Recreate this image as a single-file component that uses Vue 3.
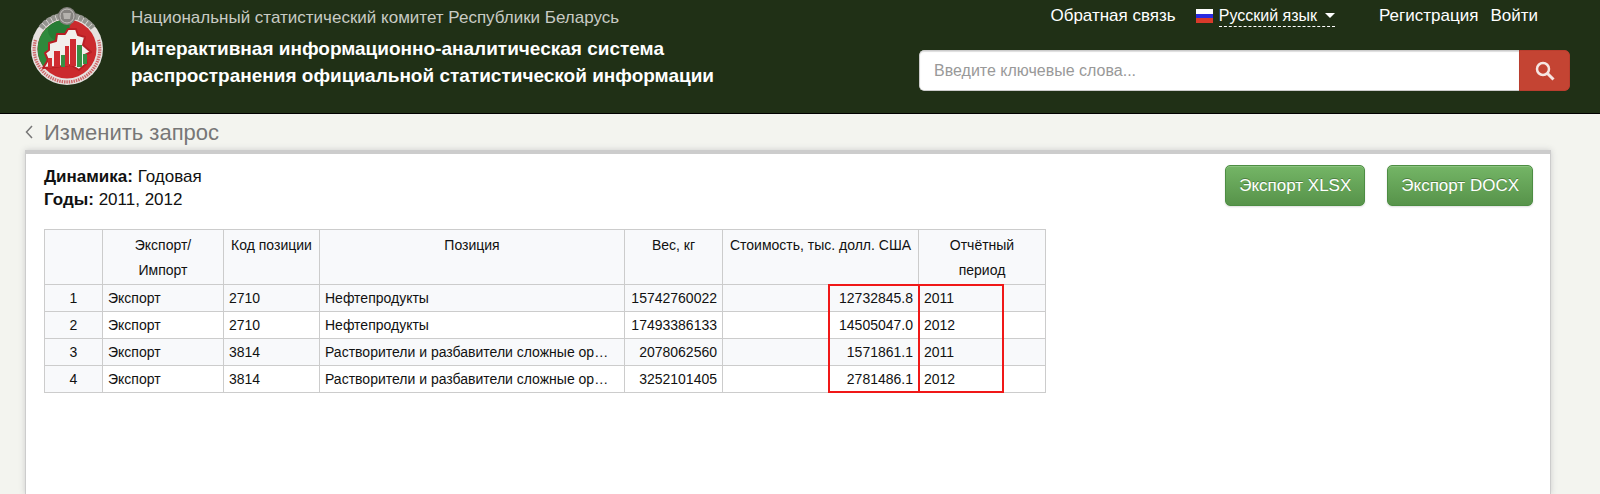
<script setup>
const columns = [
  { key: 'num', title: '', cls: 'c-num' },
  { key: 'dir', title: 'Экспорт/ Импорт', cls: 'c-dir' },
  { key: 'code', title: 'Код позиции', cls: 'c-code' },
  { key: 'name', title: 'Позиция', cls: 'c-name' },
  { key: 'weight', title: 'Вес, кг', cls: 'c-weight' },
  { key: 'cost', title: 'Стоимость, тыс. долл. США', cls: 'c-cost' },
  { key: 'period', title: 'Отчётный период', cls: 'c-period' },
]
const rows = [
  { dir: 'Экспорт', code: '2710', name: 'Нефтепродукты', weight: '15742760022', cost: '12732845.8', period: '2011' },
  { dir: 'Экспорт', code: '2710', name: 'Нефтепродукты', weight: '17493386133', cost: '14505047.0', period: '2012' },
  { dir: 'Экспорт', code: '3814', name: 'Растворители и разбавители сложные ор…', weight: '2078062560', cost: '1571861.1', period: '2011' },
  { dir: 'Экспорт', code: '3814', name: 'Растворители и разбавители сложные ор…', weight: '3252101405', cost: '2781486.1', period: '2012' },
]
const dataColumns = columns.slice(1)
</script>

<template>
  <div class="page">
    <header class="top">
      <a class="brand" href="#">
        <svg class="logo" viewBox="0 0 76 80" aria-hidden="true">
          <defs>
            <clipPath id="disc"><circle cx="38" cy="43" r="29.500" /></clipPath>
          </defs>
          <circle cx="38" cy="43" r="36" fill="#e6e2e0" />
          <path d="M12 22 A33 33 0 0 1 64 22" fill="none" stroke="#94948f" stroke-width="6" stroke-dasharray="4 0.7" />
          <path d="M6.500 34 A32.800 32.800 0 1 0 69.500 34" fill="none" stroke="#cf6769" stroke-width="3.200" stroke-dasharray="1.500 0.9" />
          <g clip-path="url(#disc)">
            <rect x="6" y="12" width="64" height="64" fill="#cb2a2d" />
            <path d="M6 12H46L36 27 27 32 19 45 17 60H6Z" fill="#2f8a3c" />
            <circle cx="30" cy="24" r="11" fill="#277d35" />
          </g>
          <path d="M20 37 27 35 28 28 36 28 39 23 47 23 49 29 56 31 54 39 62 46 56 49 58 57 50 64 42 59 27 61 14 62 19 54 16 47 20 44Z" fill="#f2efec" stroke="#b81f24" stroke-width="2" stroke-linejoin="round" />
          <path d="M19 52h4v10h-4zM25 45h6v16h-6zM36 40h4v20h-4zM41 33h6v27h-6z" fill="#cf2c31" />
          <path d="M32 49h4v12h-4zM48 39h5v22h-5zM54 48h4v10h-4z" fill="#369045" />
          <circle cx="38" cy="10" r="9" fill="#85827f" />
          <circle cx="38" cy="10" r="7" fill="none" stroke="#c4c1be" stroke-width="1" />
          <path d="M34 7h8l-1 6h-6z" fill="#b5b2ae" />
        </svg>
        <span class="names">
          <span class="org">Национальный статистический комитет Республики Беларусь</span>
          <strong class="system">Интерактивная информационно-аналитическая система<br />распространения официальной статистической информации</strong>
        </span>
      </a>
      <div class="tools">
        <nav class="links">
          <a class="feedback" href="#">Обратная связь</a>
          <button class="lang" type="button">
            <svg class="flag" viewBox="0 0 17 14" aria-hidden="true">
              <path d="M0 0h17v5H0z" fill="#fff" />
              <path d="M0 5h17v4H0z" fill="#2a2ae0" />
              <path d="M0 9h17v5H0z" fill="#d93a2b" />
            </svg>
            <span class="lang-name">Русский язык<i class="caret"></i></span>
          </button>
          <a class="register" href="#">Регистрация</a>
          <a class="login" href="#">Войти</a>
        </nav>
        <form class="search" @submit.prevent>
          <input type="search" aria-label="Поиск" placeholder="Введите ключевые слова..." />
          <button type="submit" aria-label="Найти">
            <svg viewBox="0 0 20 20" aria-hidden="true">
              <circle cx="8" cy="8" r="6" fill="none" stroke="#f6e6e2" stroke-width="2.500" />
              <path d="M12.500 12.500 18.500 18.500" stroke="#f6e6e2" stroke-width="3" />
            </svg>
          </button>
        </form>
      </div>
    </header>

    <main>
      <a class="back" href="#">
        <svg viewBox="0 0 8 14" aria-hidden="true"><path d="M7 1 1.500 7 7 13" fill="none" stroke="#777" stroke-width="1.500" /></svg>
        <span>Изменить запрос</span>
      </a>
      <section class="sheet">
        <div class="summary">
          <div class="facts">
            <div><b>Динамика:</b> Годовая</div>
            <div><b>Годы:</b> 2011, 2012</div>
          </div>
          <div class="exports">
            <button type="button">Экспорт XLSX</button>
            <button type="button">Экспорт DOCX</button>
          </div>
        </div>
        <div class="grid-wrap">
          <table>
            <colgroup><col v-for="c in columns" :key="c.key" :class="c.cls" /></colgroup>
            <thead>
              <tr><th v-for="c in columns" :key="c.key" scope="col">{{ c.title }}</th></tr>
            </thead>
            <tbody>
              <tr v-for="(r, i) in rows" :key="i">
                <th scope="row">{{ i + 1 }}</th>
                <td v-for="c in dataColumns" :key="c.key" :class="{ number: c.key === 'weight' || c.key === 'cost' }">{{ r[c.key] }}</td>
              </tr>
            </tbody>
          </table>
          <div class="mark mark-cost"></div>
          <div class="mark mark-period"></div>
        </div>
      </section>
    </main>
  </div>
</template>

<style>
body { background: #f3f4ef; }
</style>

<style scoped>
* { box-sizing: border-box; }
.page {
  display: flex;
  flex-direction: column;
  min-height: 100vh;
  font: 17px/23px "Liberation Sans", Arial, sans-serif;
  color: #111;
}
a { color: inherit; text-decoration: none; }
button, input { font: inherit; }
.top {
  display: flex;
  justify-content: space-between;
  gap: 32px;
  padding: 6px 30px 22px 29px;
  background: #203016;
  border-bottom: 1px solid #000;
  color: #fff;
}
.brand { display: flex; gap: 26px; }
.logo { width: 76px; height: 80px; flex: none; }
.names { display: flex; flex-direction: column; white-space: nowrap; }
.org { line-height: 24px; color: #c8cbc4; margin-bottom: 5px; }
.system { font-size: 19px; line-height: 27px; }
.tools { flex: 0 1 651px; }
.links { display: flex; align-items: center; justify-content: flex-end; height: 20px; padding-right: 32px; line-height: 20px; }
.lang { display: flex; align-items: center; gap: 6px; margin: 0 44px 0 20px; padding: 0; border: 0; background: none; color: inherit; font-size: 16px; }
.flag { width: 17px; height: 14px; }
.lang-name { display: flex; align-items: center; gap: 8px; border-bottom: 1px dashed #fff; }
.caret { border: 5px solid transparent; border-top-color: #fff; border-bottom: 0; }
.login { margin-left: 12px; }
.search { display: flex; margin-top: 24px; height: 41px; border-radius: 5px; overflow: hidden; }
.search input {
  flex: 1;
  min-width: 0;
  padding: 0 14px;
  border: 1px solid #ccc;
  border-right: 0;
  border-radius: 5px 0 0 5px;
  background: #fff;
  outline: 0;
  box-shadow: inset 0 1px 1px #ddd;
  font-size: 16px;
}
.search input::placeholder { color: #999; opacity: 1; }
.search button { width: 51px; padding: 0; border: 1px solid #b93d2e; border-radius: 0 5px 5px 0; background: #c44433; display: grid; place-items: center; }
.search svg { width: 20px; height: 20px; }
main { flex: 1; display: flex; flex-direction: column; padding: 0 49px 0 25px; }
.back { display: flex; align-items: center; gap: 11px; align-self: flex-start; height: 36px; color: #777; font-size: 22px; }
.back svg { width: 8px; height: 14px; }
.sheet { flex: 1; padding: 11px 17px 0 18px; background: #fff; border-top: 4px solid #ccc; border-right: 1px solid #ccc; border-left: 1px solid #ccc; box-shadow: 0 0 6px #ccc; }
.summary { display: flex; justify-content: space-between; }
.exports { display: flex; gap: 22px; }
.exports button {
  height: 41px;
  padding: 0 13px;
  border: 1px solid #4d8d43;
  border-radius: 5px;
  background: linear-gradient(#74b566, #57934a);
  box-shadow: inset 0 1px 0 #8cc380, 0 1px 2px #ddd;
  color: #fff;
  text-shadow: 0 -1px 0 #4c8040;
}
.grid-wrap { position: relative; width: 1002px; margin-top: 18px; }
table { width: 100%; table-layout: fixed; border-collapse: collapse; font-size: 14px; line-height: 25px; }
.c-num { width: 58px; }
.c-dir { width: 121px; }
.c-code { width: 96px; }
.c-name { width: 305px; }
.c-weight { width: 98px; }
.c-cost { width: 196px; }
th, td { border: 1px solid #ccc; padding: 0 5px; font-weight: normal; text-align: left; white-space: nowrap; }
td { height: 27px; }
th { background: #f8f9fb; text-align: center; }
thead th { padding: 3px 0 1px; white-space: normal; vertical-align: top; }
thead th:nth-child(2), thead th:nth-child(7) { padding: 3px 24px 1px; }
tbody tr:nth-child(odd) { background: #f8f9fb; }
.number { text-align: right; }
.mark { position: absolute; top: 55px; height: 109px; border: 2px solid #f01818; }
.mark-cost { left: 784px; width: 92px; }
.mark-period { left: 874px; width: 86px; }
</style>
